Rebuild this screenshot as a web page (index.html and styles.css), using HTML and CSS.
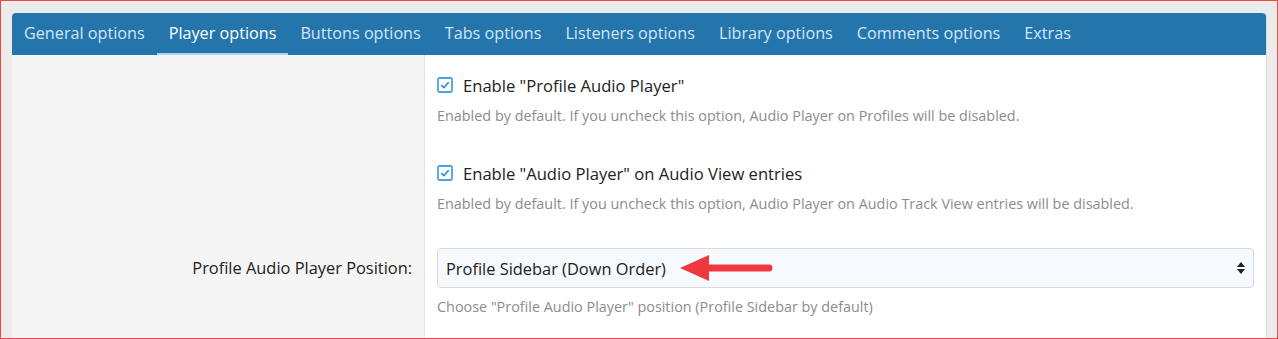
FILE: index.html
```html
<!DOCTYPE html>
<html>
<head>
  <title>Player options</title>
  <link rel="stylesheet" href="styles.css">
</head>
<body>
  <div class="panel">
    <ul class="tabs">
      <li>General options</li>
      <li class="active">Player options</li>
      <li>Buttons options</li>
      <li>Tabs options</li>
      <li>Listeners options</li>
      <li>Library options</li>
      <li>Comments options</li>
      <li>Extras</li>
    </ul>

    <div class="row">
      <div class="label"></div>
      <div class="field">
        <label class="check">
          <svg class="box" width="16" height="16" viewBox="0 0 16 16"><rect x="1" y="1" width="14" height="14" rx="1.5" fill="#fff" stroke="#4aa3e6" stroke-width="1.8"/><path d="M4.3 8.1 L6.9 10.6 L11.7 5.2" fill="none" stroke="#2f8fd8" stroke-width="1.7"/></svg>
          Enable "Profile Audio Player"
        </label>
        <p class="help">Enabled by default. If you uncheck this option, Audio Player on Profiles will be disabled.</p>
      </div>
    </div>

    <div class="row">
      <div class="label"></div>
      <div class="field">
        <label class="check">
          <svg class="box" width="16" height="16" viewBox="0 0 16 16"><rect x="1" y="1" width="14" height="14" rx="1.5" fill="#fff" stroke="#4aa3e6" stroke-width="1.8"/><path d="M4.3 8.1 L6.9 10.6 L11.7 5.2" fill="none" stroke="#2f8fd8" stroke-width="1.7"/></svg>
          Enable "Audio Player" on Audio View entries
        </label>
        <p class="help">Enabled by default. If you uncheck this option, Audio Player on Audio Track View entries will be disabled.</p>
      </div>
    </div>

    <div class="row last">
      <div class="label select-label">Profile Audio Player Position:</div>
      <div class="field">
        <div class="select">
          <span>Profile Sidebar (Down Order)</span>
          <svg class="updown" width="8" height="12" viewBox="0 0 8 12"><path d="M4 0 L8 5 L0 5 Z M0 7 L8 7 L4 12 Z" fill="#222"/></svg>
          <!-- annotation arrow -->
          <svg class="arrow" width="94" height="32" viewBox="0 0 94 32"><path d="M0 16 L29 3 L29 29 Z" fill="#f0393e"/><line x1="26" y1="16" x2="89" y2="16" stroke="#f0393e" stroke-width="7" stroke-linecap="round"/></svg>
        </div>
        <p class="help">Choose "Profile Audio Player" position (Profile Sidebar by default)</p>
      </div>
    </div>
  </div>
</body>
</html>
```

FILE: styles.css
```css
html, body {
  height: 100%;
}
body {
  margin: 0;
  box-sizing: border-box;
  border: 1px solid #f24848;
  background-color: #ececec;
  font-family: "Open Sans", "Noto Sans", sans-serif;
  overflow: hidden;
  display: flex;
  flex-direction: column;
}
.panel {
  flex: 1;
  display: flex;
  flex-direction: column;
  margin: 12px 0 0 11px;
  width: 1254px;
  background-color: #fff;
  border-right: 1px solid #dcdcdc;
  border-radius: 4px 4px 0 0;
}
.tabs {
  display: flex;
  list-style: none;
  margin: 0;
  padding: 0;
  height: 42px;
  background-color: #2575ad;
  border-radius: 4px 4px 0 0;
}
.tabs li {
  padding: 0 12px;
  line-height: 40px;
  color: #d3e6f5;
  font-size: 16.2px;
  border-bottom: 2px solid transparent;
}
.tabs li.active {
  color: #fff;
  border-bottom-color: #a9d3f2;
}
.row {
  display: grid;
  grid-template-columns: 413px 1fr;
}
.row.last {
  flex: 1;
}
.label {
  background-color: #f5f5f5;
  border-right: 1px solid #e6e6e6;
}
.field {
  padding: 18px 12px 16px 12px;
}
.check {
  display: flex;
  align-items: center;
  gap: 10px;
  height: 24px;
  font-size: 16.6px;
  color: #222;
}
.help {
  margin: 8px 0 0;
  line-height: 22px;
  font-size: 14.4px;
  color: #8c8c8c;
}
.select-label {
  text-align: right;
  padding: 17px 12px 0 0;
  line-height: 40px;
  font-size: 16.4px;
  color: #222;
}
.row.last .field {
  padding-top: 17px;
}
.select {
  position: relative;
  display: flex;
  align-items: center;
  justify-content: space-between;
  height: 38px;
  padding: 0 8px;
  border: 1px solid #dadada;
  border-radius: 4px;
  background-color: #f6f9fd;
  font-size: 16.4px;
  color: #222;
}
.arrow {
  position: absolute;
  left: 242px;
  top: 3px;
}
```
